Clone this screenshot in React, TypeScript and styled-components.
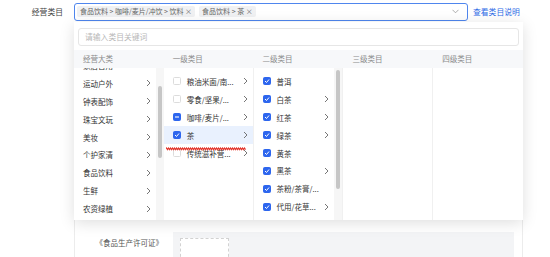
import styled, { createGlobalStyle } from "styled-components";

const GlobalStyle = createGlobalStyle`
  html, body {
    margin: 0;
    padding: 0;
    background: #fff;
  }
  body {
    font-family: "Noto Sans CJK SC", "Noto Sans", sans-serif;
    color: #333;
  }
  * {
    box-sizing: border-box;
  }
`;

const Page = styled.div`
  width: 550px;
  height: 257px;
  overflow: hidden;
  position: relative;
`;

const FieldRow = styled.div`
  display: flex;
  align-items: center;
  height: 22px;
  padding-top: 1px;
`;

const FieldLabel = styled.div`
  width: 74px;
  padding-right: 11px;
  text-align: right;
  font-size: 7.8px;
  color: #444;
`;

const SelectWrap = styled.div`
  position: relative;
`;

const Select = styled.div`
  width: 394px;
  height: 18px;
  border: 1px solid #4f86ee;
  border-radius: 3px;
  display: flex;
  align-items: center;
  gap: 4px;
  padding: 0 8px 0 2px;
  background: #fff;
`;

const Tag = styled.span`
  height: 11px;
  line-height: 11px;
  padding: 0 3px;
  background: #f0f1f3;
  border-radius: 2px;
  font-size: 7px;
  color: #666;
  white-space: nowrap;
`;

const Chevron = styled.svg`
  margin-left: auto;
`;

const HelpLink = styled.a`
  margin-left: 5px;
  font-size: 7.8px;
  color: #2e6be6;
  text-decoration: none;
`;

const Dropdown = styled.div`
  position: absolute;
  top: 19px;
  left: 0;
  width: 449px;
  height: 198px;
  background: #fff;
  box-shadow: 0 3px 14px rgba(0, 0, 0, 0.13);
  z-index: 10;
  display: flex;
  flex-direction: column;
  padding-top: 6px;
`;

const SearchInput = styled.div`
  margin: 0 4px 4px;
  height: 18px;
  border: 1px solid #e6e6e6;
  border-radius: 3px;
  padding-left: 6px;
  display: flex;
  align-items: center;
  font-size: 7.8px;
  color: #b8b8b8;
`;

const HeaderRow = styled.div`
  display: grid;
  grid-template-columns: repeat(5, 1fr);
  height: 18px;
  background: #f7f8fa;
  position: relative;
  z-index: 1;
`;

const HeaderCell = styled.div`
  padding-left: 9px;
  display: flex;
  align-items: center;
  font-size: 7.5px;
  color: #8a8a8a;
`;

const Body = styled.div`
  flex: 1;
  display: grid;
  grid-template-columns: repeat(5, 1fr);
  min-height: 0;
  overflow: hidden;
`;

const Column = styled.div<{ $divider?: boolean }>`
  display: flex;
  min-height: 0;
  overflow: hidden;
  position: relative;
  border-right: ${(p) => (p.$divider ? "1px solid #f0f0f0" : "none")};
`;

const List = styled.div<{ $offset: number }>`
  flex: 1;
  min-width: 0;
  padding-top: ${(p) => (p.$offset > 0 ? p.$offset : 0)}px;
  margin-top: ${(p) => (p.$offset < 0 ? p.$offset : 0)}px;
`;

const Row = styled.div<{ $active?: boolean }>`
  height: 17.9px;
  display: flex;
  align-items: center;
  padding: 0 5px 0 9px;
  font-size: 7.5px;
  color: #333;
  white-space: nowrap;
  background: ${(p) => (p.$active ? "#e9f1fe" : "transparent")};
`;

const RowText = styled.span`
  flex: 1;
  min-width: 0;
`;

const Box = styled.span<{ $state: "on" | "off" | "half" }>`
  width: 8px;
  height: 8px;
  margin-right: 6px;
  border-radius: 1.5px;
  flex-shrink: 0;
  display: flex;
  align-items: center;
  justify-content: center;
  background: ${(p) => (p.$state === "off" ? "#fff" : "#2d66ee")};
  border: 1px solid ${(p) => (p.$state === "off" ? "#dcdcdc" : "#2d66ee")};
`;

const Track = styled.div`
  width: 8px;
  flex-shrink: 0;
  background: #f6f6f6;
  display: flex;
  justify-content: center;
`;

const Thumb = styled.div<{ $top: number; $height: number }>`
  width: 4px;
  margin-top: ${(p) => p.$top}px;
  height: ${(p) => p.$height}px;
  border-radius: 2px;
  background: #c6c6c6;
`;

const Squiggle = styled.svg`
  position: absolute;
  left: 2px;
  top: 79px;
`;

const Card = styled.div`
  margin-left: 74px;
  width: 449px;
  height: 240px;
  border-left: 1px solid #ececec;
  border-right: 1px solid #ececec;
  padding-top: 210px;
`;

const LicenseRow = styled.div`
  display: flex;
  align-items: flex-start;
`;

const LicenseLabel = styled.div`
  width: 98px;
  padding-right: 10px;
  padding-top: 5px;
  text-align: right;
  font-size: 7.5px;
  color: #555;
  white-space: nowrap;
`;

const UploadArea = styled.div`
  width: 341px;
  height: 40px;
  background: #f3f4f6;
  padding: 6px 7px;
`;

const UploadBox = styled.div`
  width: 49px;
  height: 40px;
  border: 1px dashed #d2d2d2;
  background: #fff;
  display: flex;
  align-items: flex-end;
  justify-content: center;
  font-size: 10px;
  line-height: 10px;
  color: #999;
`;

function Arrow() {
  return (
    <svg width="5" height="8" viewBox="0 0 5 8">
      <polyline points="1,1 4,4 1,7" fill="none" stroke="#666" strokeWidth="0.9" />
    </svg>
  );
}

function Check({ state }: { state: "on" | "off" | "half" }) {
  return (
    <Box $state={state}>
      {state === "on" && (
        <svg width="6" height="6" viewBox="0 0 6 6">
          <polyline points="1,3 2.5,4.5 5,1.5" fill="none" stroke="#fff" strokeWidth="1" />
        </svg>
      )}
      {state === "half" && (
        <svg width="6" height="6" viewBox="0 0 6 6">
          <line x1="1" y1="3" x2="5" y2="3" stroke="#fff" strokeWidth="1.1" />
        </svg>
      )}
    </Box>
  );
}

const bigCats = ["家居日用", "运动户外", "钟表配饰", "珠宝文玩", "美妆", "个护家清", "食品饮料", "生鲜", "农资绿植"];

const level1: { name: string; state: "on" | "off" | "half"; active?: boolean }[] = [
  { name: "粮油米面/南...", state: "off" },
  { name: "零食/坚果/...", state: "off" },
  { name: "咖啡/麦片/...", state: "half" },
  { name: "茶", state: "on", active: true },
  { name: "传统滋补营...", state: "off" },
];

const level2: { name: string; more: boolean }[] = [
  { name: "普洱", more: false },
  { name: "白茶", more: true },
  { name: "红茶", more: true },
  { name: "绿茶", more: true },
  { name: "黄茶", more: false },
  { name: "黑茶", more: true },
  { name: "茶粉/茶膏/...", more: false },
  { name: "代用/花草...", more: true },
];

const wave = Array.from({ length: 80 }, (_, i) => `L${i + 0.5} ${i % 2 ? 2.6 : 1} `).join("");

export default function App() {
  return (
    <Page>
      <GlobalStyle />
      <FieldRow>
        <FieldLabel>经营类目</FieldLabel>
        <SelectWrap>
          <Select>
            <Tag>食品饮料 &gt; 咖啡/麦片/冲饮 &gt; 饮料 ×</Tag>
            <Tag>食品饮料 &gt; 茶 ×</Tag>
            <Chevron width="7" height="5" viewBox="0 0 7 5">
              <polyline points="0.5,0.8 3.5,3.8 6.5,0.8" fill="none" stroke="#999" strokeWidth="0.8" />
            </Chevron>
          </Select>
          <Dropdown>
            <SearchInput>请输入类目关键词</SearchInput>
            <HeaderRow>
              <HeaderCell>经营大类</HeaderCell>
              <HeaderCell>一级类目</HeaderCell>
              <HeaderCell>二级类目</HeaderCell>
              <HeaderCell>三级类目</HeaderCell>
              <HeaderCell>四级类目</HeaderCell>
            </HeaderRow>
            <Body>
              <Column>
                <List $offset={-11}>
                  {bigCats.map((c) => (
                    <Row key={c}>
                      <RowText>{c}</RowText>
                      <Arrow />
                    </Row>
                  ))}
                </List>
                <Track>
                  <Thumb $top={18} $height={72} />
                </Track>
              </Column>
              <Column $divider>
                <List $offset={5}>
                  {level1.map((c) => (
                    <Row key={c.name} $active={c.active}>
                      <Check state={c.state} />
                      <RowText>{c.name}</RowText>
                      <Arrow />
                    </Row>
                  ))}
                </List>
                <Squiggle width="82" height="4" viewBox="0 0 82 4">
                  <path d={`M0 1.8 ${wave}`} fill="none" stroke="#e3342b" strokeWidth="1.1" />
                </Squiggle>
              </Column>
              <Column $divider>
                <List $offset={5}>
                  {level2.map((c) => (
                    <Row key={c.name}>
                      <Check state="on" />
                      <RowText>{c.name}</RowText>
                      {c.more && <Arrow />}
                    </Row>
                  ))}
                </List>
                <Track>
                  <Thumb $top={2} $height={119} />
                </Track>
              </Column>
              <Column $divider />
              <Column />
            </Body>
          </Dropdown>
        </SelectWrap>
        <HelpLink href="#none">查看类目说明</HelpLink>
      </FieldRow>
      <Card>
        <LicenseRow>
          <LicenseLabel>《食品生产许可证》</LicenseLabel>
          <UploadArea>
            <UploadBox>+</UploadBox>
          </UploadArea>
        </LicenseRow>
      </Card>
    </Page>
  );
}
